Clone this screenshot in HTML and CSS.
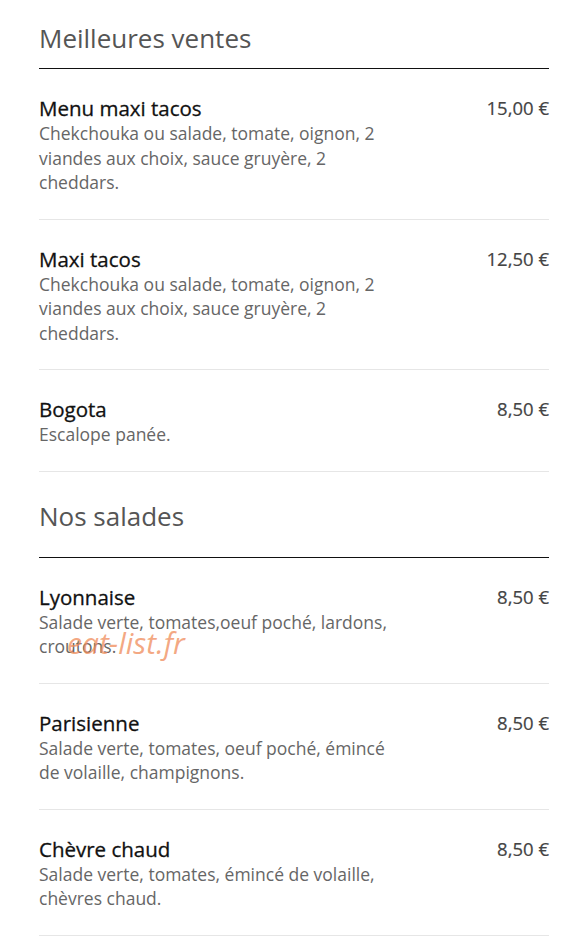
FILE: index.html
```html
<html>
<head>
<title>Carte</title>
<link rel="stylesheet" href="styles.css">
</head>
<body>

<div class="menu">
  <div class="section-header first">Meilleures ventes</div>

  <div class="item">
    <div class="item-text">
      <div class="item-name">Menu maxi tacos</div>
      <div class="item-desc">Chekchouka ou salade, tomate, oignon, 2 viandes aux choix, sauce gruyère, 2 cheddars.</div>
    </div>
    <div class="item-price">15,00 €</div>
  </div>

  <div class="item">
    <div class="item-text">
      <div class="item-name">Maxi tacos</div>
      <div class="item-desc">Chekchouka ou salade, tomate, oignon, 2 viandes aux choix, sauce gruyère, 2 cheddars.</div>
    </div>
    <div class="item-price">12,50 €</div>
  </div>

  <div class="item">
    <div class="item-text">
      <div class="item-name">Bogota</div>
      <div class="item-desc">Escalope panée.</div>
    </div>
    <div class="item-price">8,50 €</div>
  </div>

  <div class="section-header">Nos salades</div>

  <div class="item">
    <div class="item-text">
      <div class="item-name">Lyonnaise</div>
      <div class="item-desc">Salade verte, tomates,oeuf poché, lardons, croutons.</div>
    </div>
    <div class="item-price">8,50 €</div>
    <span class="watermark">eat-list.fr</span>
  </div>

  <div class="item">
    <div class="item-text">
      <div class="item-name">Parisienne</div>
      <div class="item-desc">Salade verte, tomates, oeuf poché, émincé de volaille, champignons.</div>
    </div>
    <div class="item-price">8,50 €</div>
  </div>

  <div class="item">
    <div class="item-text">
      <div class="item-name">Chèvre chaud</div>
      <div class="item-desc">Salade verte, tomates, émincé de volaille, chèvres chaud.</div>
    </div>
    <div class="item-price">8,50 €</div>
  </div>
</div>

</body>
</html>
```

FILE: styles.css
```css
body {
  margin:0;
  background:#fff;
  font-family:"Open Sans", "Liberation Sans", sans-serif;
}

.menu {
  padding:0 39px 0 39px;
}

.section-header {
  font-size:26px;
  line-height:32px;
  color:#555;
  margin-top:28px;
  padding-bottom:25px;
  border-bottom:1px solid #111;
}

.section-header.first {
  margin-top:22px;
  padding-bottom:14px;
}

.item {
  position:relative;
  display:flex;
  justify-content:space-between;
  padding:26px 0 24px 0;
  border-bottom:1px solid #e6e6e6;
}

.item-text {
  width:70%;
}

.item-name {
  font-size:20.5px;
  line-height:26px;
  color:#111;
  -webkit-text-stroke:0.3px #111;
}

.item-desc {
  font-size:17.5px;
  line-height:24.5px;
  color:#666;
}

.item-price {
  font-size:18.5px;
  line-height:26px;
  color:#444;
  -webkit-text-stroke:0.2px #444;
}

.watermark {
  position:absolute;
  left:28px;
  top:64px;
  font-size:30px;
  font-style:italic;
  color:rgba(240,140,90,0.75);
}
```
